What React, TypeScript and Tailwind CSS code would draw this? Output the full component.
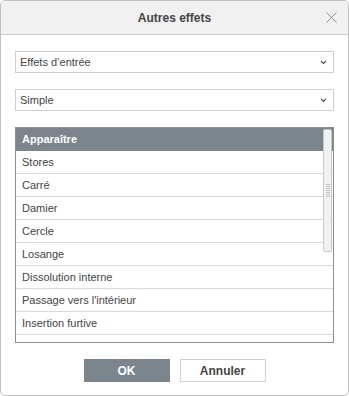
import React from 'react'

const font = { fontFamily: '"Liberation Sans", Arial, sans-serif' }

const rows = [
  'Stores',
  'Carré',
  'Damier',
  'Cercle',
  'Losange',
  'Dissolution interne',
  "Passage vers l'intérieur",
  'Insertion furtive',
  '',
]

function Chevron() {
  return (
    <svg width="7" height="5" viewBox="0 0 7 5" className="shrink-0">
      <path d="M1 1 L3.5 3.5 L6 1" fill="none" stroke="#555" strokeWidth="1.2" />
    </svg>
  )
}

function Select({ value }: { value: string }) {
  return (
    <div className="flex h-[22px] items-center justify-between border border-[#cfcfcf] bg-white pl-[4px] pr-[6px] text-[11px] text-[#444]">
      <span>{value}</span>
      <Chevron />
    </div>
  )
}

export default function App() {
  return (
    <div
      className="flex h-[396px] w-[349px] flex-col overflow-hidden rounded-[5px] border border-[#c0c0c0] bg-white"
      style={font}
    >
      {/* header */}
      <div className="relative flex h-[34px] shrink-0 items-center justify-center border-b border-[#cbcbcb] bg-[#f1f1f1]">
        <span className="text-[12px] font-bold text-[#444]">Autres effets</span>
        <button className="absolute right-[11px] top-[11px] flex h-[11px] w-[11px] items-center justify-center">
          <svg width="11" height="11" viewBox="0 0 11 11">
            <path d="M0.5 0.5 L10.5 10.5 M10.5 0.5 L0.5 10.5" stroke="#8f8f8f" strokeWidth="1" />
          </svg>
        </button>
      </div>

      {/* body */}
      <div className="flex flex-col gap-[16px] px-[14px] pt-[16px]">
        <Select value="Effets d’entrée" />
        <Select value="Simple" />

        <div className="relative h-[216px] overflow-hidden border border-[#8d8d8d] text-[11px] text-[#444]">
          <div className="flex h-[23px] items-center bg-[#7c858c] pl-[6px] font-bold text-white">
            Apparaître
          </div>
          {rows.map((r, i) => (
            <div
              key={i}
              className="flex h-[23px] items-center border-b border-[#d8d8d8] pl-[6px]"
            >
              {r}
            </div>
          ))}
          {/* scrollbar thumb */}
          <div className="absolute right-[1px] top-[1px] flex h-[123px] w-[9px] flex-col items-center justify-center gap-[1px] rounded-[2px] border border-[#c8c8c8] bg-[#f1f1f1]">
            {[0, 1, 2, 3, 4, 5, 6].map((k) => (
              <div key={k} className="h-[1px] w-[4px] bg-[#c4c4c4]" />
            ))}
          </div>
        </div>

        <div className="flex justify-center gap-[10px]">
          <button className="h-[23px] w-[86px] bg-[#7c858c] text-[12px] font-bold text-white">
            OK
          </button>
          <button className="h-[23px] w-[86px] border border-[#cfcfcf] bg-white text-[12px] font-bold text-[#444]">
            Annuler
          </button>
        </div>
      </div>
    </div>
  )
}
